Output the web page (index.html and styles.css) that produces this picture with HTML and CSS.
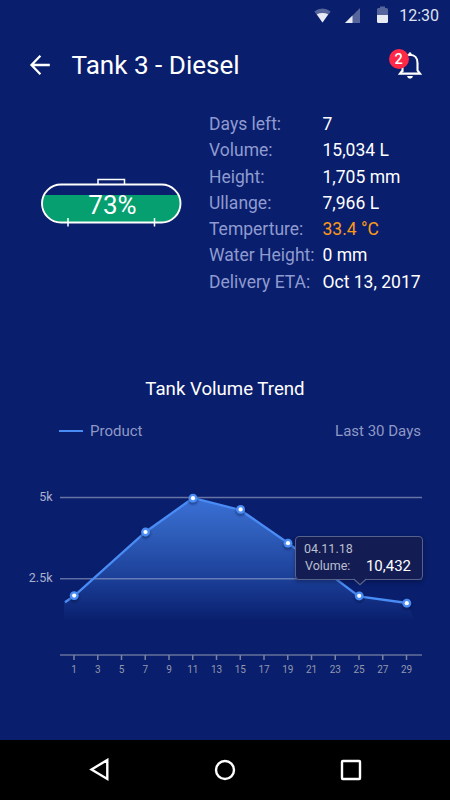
FILE: index.html
```html
<!DOCTYPE html>
<html lang="en">
<head>
<meta charset="utf-8">
<title>Tank 3 - Diesel</title>
<link rel="stylesheet" href="styles.css">
</head>
<body>
<div class="screen">
  <div class="status">
    <svg class="status-icons" width="80" height="18" viewBox="0 0 80 18">
      <path d="M0.300 4.600Q8.500-1.600 16.700 4.600L8.500 15.500Z" fill="#e9ebf4" fill-opacity=".35"/>
      <path d="M2.800 7.200Q8.500 5 14.200 7.200L8.500 15.500Z" fill="#e9ebf4"/>
      <path d="M31 16L46 1V16Z" fill="#e9ebf4" fill-opacity=".35"/>
      <path d="M31 16L38.500 8.500V16Z" fill="#e9ebf4"/>
      <path d="M63 8V2.500Q63 1 64.500 1H66V-.5H71V1H72.500Q74 1 74 2.500V8Z" fill="#e9ebf4" fill-opacity=".35"/>
      <path d="M63 8H74V14.500Q74 16 72.500 16H64.500Q63 16 63 14.500Z" fill="#e9ebf4"/>
    </svg>
    <span class="clock">12:30</span>
  </div>
  <header class="header">
    <svg class="back" width="22" height="22" viewBox="0 0 22 22" fill="none" stroke="#fff" stroke-width="2.300"><path d="M20.800 11H3M11.400 1.800L2.500 11L11.400 20.200"/></svg>
    <h1 class="title">Tank 3 - Diesel</h1>
    <div class="bell">
      <svg width="26" height="30" viewBox="0 0 26 30" fill="none" stroke="#fff" stroke-width="2.100">
        <path d="M5.500 22V13C5.500 8 8.500 4.800 13 4.800S20.500 8 20.500 13V20.500L23 23.600H3L5.500 20.500"/>
        <path d="M13 4.500V3.800" stroke-width="3" stroke-linecap="round"/>
        <path d="M10 26H16Q15.500 28.700 13 28.700T10 26Z" fill="#fff" stroke="none"/>
      </svg>
      <span class="badge">2</span>
    </div>
  </header>
  <section class="summary">
    <div class="tank">
      <svg width="144" height="54" viewBox="0 0 144 54">
        <path d="M3 18H140Q143 43 121 45H22Q0 43 3 18Z" fill="#059f70"/>
        <rect x="2" y="7.500" width="138.500" height="38" rx="19" fill="none" stroke="#fff" stroke-width="1.900"/>
        <path d="M58 7V2.500H84.500V7M28 41V49.500M114.500 41V49.500" fill="none" stroke="#fff" stroke-width="1.500"/>
      </svg>
      <span class="percent">73%</span>
    </div>
    <dl class="facts">
      <dt>Days left:</dt><dd>7</dd>
      <dt>Volume:</dt><dd>15,034 L</dd>
      <dt>Height:</dt><dd>1,705 mm</dd>
      <dt>Ullange:</dt><dd>7,966 L</dd>
      <dt>Temperture:</dt><dd class="warn">33.4 °C</dd>
      <dt>Water Height:</dt><dd>0 mm</dd>
      <dt>Delivery ETA:</dt><dd>Oct 13, 2017</dd>
    </dl>
  </section>
  <section class="trend">
    <h2 class="trend-title">Tank Volume Trend</h2>
    <div class="legend">
      <span class="series"><i class="swatch"></i>Product</span>
      <span>Last 30 Days</span>
    </div>
    <div class="chart">
      <svg width="450" height="210" viewBox="0 480 450 210">
        <defs>
          <linearGradient id="area" gradientUnits="userSpaceOnUse" x1="0" y1="498" x2="0" y2="622">
            <stop offset="0" stop-color="#3b70d6"/><stop offset=".25" stop-color="#3060be"/><stop offset=".65" stop-color="#1b3f98"/><stop offset="1" stop-color="#091e6c"/>
          </linearGradient>
          <filter id="shadow" x="-100%" y="-100%" width="300%" height="300%"><feDropShadow dx="0" dy="1.500" stdDeviation="1.500" flood-color="#020b35" flood-opacity=".6"/></filter>
          <g id="dot"><circle r="4.400" fill="#4a8cf5"/><circle r="2.100" fill="#fff"/></g>
        </defs>
        <path d="M64 602L74 596L145.500 532L193 498L240.500 510L288 543L359 596.500L407 603L416 622H64Z" fill="url(#area)"/>
        <path d="M60 497.500H422" stroke="#6974a5" stroke-width="1.300"/>
        <path d="M60 578.800H422" stroke="#99a5ca" stroke-opacity=".6" stroke-width="1.500"/>
        <path d="M60 655H422" stroke="#66719b" stroke-width="1.600"/>
        <path class="ticks" d="M74 655v5M97.750 655v5M121.500 655v5M145.250 655v5M169 655v5M192.750 655v5M216.500 655v5M240.250 655v5M264 655v5M287.750 655v5M311.500 655v5M335.250 655v5M359 655v5M382.750 655v5M406.500 655v5"/>
        <path d="M65 602.200L74 596L145.500 532L193 498L240.500 510L288 543L359 596.500L407 603" fill="none" stroke="#4a8cf5" stroke-width="2.300"/>
        <g filter="url(#shadow)">
          <use href="#dot" x="74.200" y="595.600"/><use href="#dot" x="145.500" y="532"/><use href="#dot" x="193" y="498.200"/><use href="#dot" x="240.600" y="509.400"/><use href="#dot" x="288" y="543.200"/><use href="#dot" x="359.200" y="595.800"/><use href="#dot" x="406.800" y="603.200"/>
        </g>
        <g class="ylabels"><text x="52.500" y="501">5k</text><text x="52.500" y="581.500">2.5k</text></g>
        <g class="xlabels">
          <text x="74" y="672.700">1</text><text x="97.750" y="672.700">3</text><text x="121.500" y="672.700">5</text><text x="145.250" y="672.700">7</text><text x="169" y="672.700">9</text><text x="192.750" y="672.700">11</text><text x="216.500" y="672.700">13</text><text x="240.250" y="672.700">15</text><text x="264" y="672.700">17</text><text x="287.750" y="672.700">19</text><text x="311.500" y="672.700">21</text><text x="335.250" y="672.700">23</text><text x="359" y="672.700">25</text><text x="382.750" y="672.700">27</text><text x="406.500" y="672.700">29</text>
        </g>
      </svg>
      <div class="tooltip">
        <div class="tip-date">04.11.18</div>
        <div class="tip-row"><span>Volume:</span><b>10,432</b></div>
        <svg class="tip-arrow" width="14" height="8" viewBox="0 0 14 8"><path d="M0 0L7 6.500L14 0Z" fill="#131d53"/><path d="M.7 1L7 6.700L13.300 1" fill="none" stroke="#59628c" stroke-width="1.300"/></svg>
      </div>
    </div>
  </section>
  <nav class="navbar">
    <svg width="22" height="24" viewBox="0 0 22 24"><path d="M3.500 11.500L19.300 2V21Z"/></svg>
    <svg width="22" height="22" viewBox="0 0 22 22"><circle cx="11" cy="11" r="9"/></svg>
    <svg width="22" height="22" viewBox="0 0 22 22"><rect x="2" y="2" width="18" height="18" rx=".8"/></svg>
  </nav>
</div>
</body>
</html>
```
FILE: styles.css
```css
* { box-sizing: border-box; margin: 0; padding: 0; }
body { background: #091e6c; color: #fff; font-family: Roboto, sans-serif; }
.screen { width: 450px; height: 800px; display: flex; flex-direction: column; overflow: hidden; }
.status { height: 32px; display: flex; justify-content: flex-end; align-items: center; padding-right: 11px; gap: 5px; }
.status-icons { overflow: visible; }
.clock { font-size: 16px; line-height: 20px; color: #dfe2ef; }
.header { height: 66px; display: flex; align-items: center; padding: 0 27px 0 29px; }
.title { font-size: 26.100px; line-height: 30px; font-weight: 400; margin-left: 20.500px; flex: 1; }
.bell { position: relative; width: 26px; height: 30px; }
.bell svg { display: block; }
.badge { position: absolute; left: -8.500px; top: -1px; width: 20px; height: 20px; border-radius: 50%; background: #ff2846; font-size: 14.500px; font-weight: 500; line-height: 21px; text-align: center; }
.summary { height: 276px; display: flex; padding: 13px 0 0 40px; }
.tank { position: relative; width: 144px; height: 54px; margin-top: 66px; }
.percent { position: absolute; left: 0; top: 11px; width: 145px; text-align: center; font-size: 26px; line-height: 34px; }
.facts { margin-left: 25px; display: grid; grid-template-columns: 113.500px auto; grid-auto-rows: 26.300px; align-content: start; font-size: 17.500px; line-height: 26.300px; white-space: nowrap; }
.facts dt { color: #8f9bd0; }
.facts .warn { color: #f9991c; }
.trend { height: 366px; }
.trend-title { padding-top: 1px; font-size: 18.650px; line-height: 28px; font-weight: 400; text-align: center; }
.legend { display: flex; justify-content: space-between; align-items: center; height: 28px; margin-top: 14px; padding: 0 29px 0 59px; color: #8f99c6; font-size: 15px; }
.series { display: flex; align-items: center; gap: 7px; }
.swatch { width: 24px; height: 2.500px; background: #4a8cf5; }
.chart { position: relative; margin-top: 35px; }
.chart > svg { display: block; }
.ticks { stroke: #79829f; stroke-width: 1.500; }
.ylabels { fill: #aab1cf; font-size: 12.500px; text-anchor: end; }
.xlabels { fill: #9299ae; font-size: 10px; text-anchor: middle; }
.tooltip { position: absolute; left: 295px; top: 56px; width: 128px; height: 44px; border: 1.500px solid #59628c; border-radius: 4px; background: #131d53; color: #bcbfce; padding: 3.500px 11px 0 8px; box-shadow: 0 2px 4px rgba(0,0,20,.3); }
.tip-date { font-size: 12.500px; line-height: 16px; }
.tip-row { display: flex; justify-content: space-between; align-items: center; padding-left: 1px; font-size: 12.500px; line-height: 18px; }
.tip-row b { font-size: 15px; font-weight: 400; color: #fff; }
.tip-arrow { position: absolute; left: 57px; top: 41px; }
.navbar { height: 60px; background: #000; display: flex; justify-content: space-between; align-items: center; padding: 0 88px; }
.navbar svg { fill: none; stroke: #fff; stroke-width: 2.400; }
```
